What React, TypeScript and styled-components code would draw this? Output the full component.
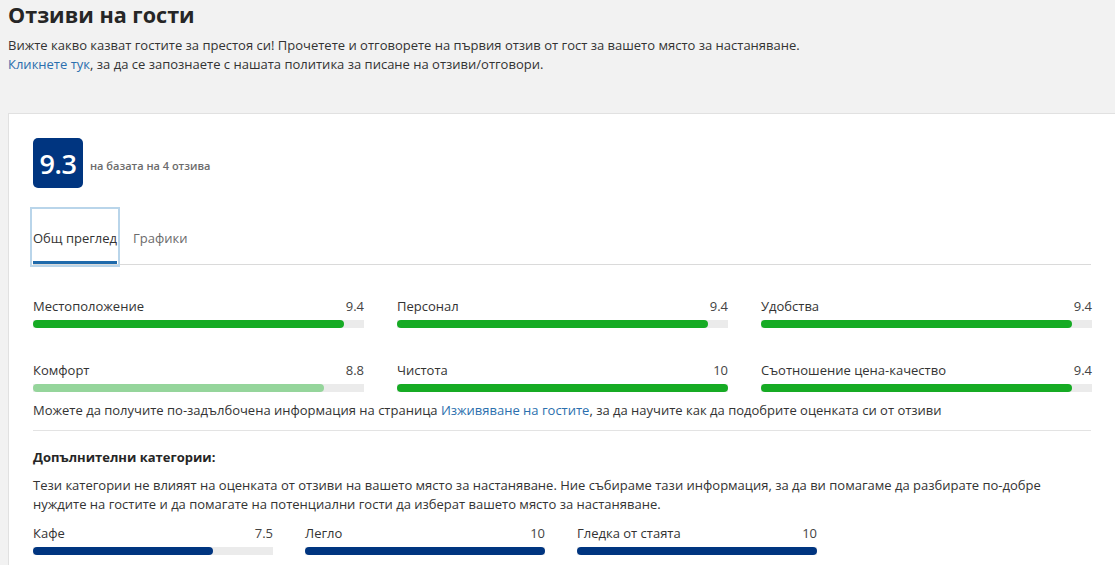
import type { FC } from 'react'
import styled, { createGlobalStyle } from 'styled-components'

const GlobalStyle = createGlobalStyle`
  html, body {
    margin: 0;
    padding: 0;
    background: #f2f2f2;
    overflow: hidden;
  }

  body {
    color: #333;
    font-family: 'Open Sans', 'Noto Sans', 'DejaVu Sans', sans-serif;
    font-size: 13px;
  }
`

type Rating = {
  label: string
  value: number
  tone?: 'strong' | 'soft' | 'navy'
}

const mainRatings: Rating[] = [
  { label: 'Местоположение', value: 9.4 },
  { label: 'Персонал', value: 9.4 },
  { label: 'Удобства', value: 9.4 },
  { label: 'Комфорт', value: 8.8, tone: 'soft' },
  { label: 'Чистота', value: 10 },
  { label: 'Съотношение цена-качество', value: 9.4 },
]

const extraRatings: Rating[] = [
  { label: 'Кафе', value: 7.5, tone: 'navy' },
  { label: 'Легло', value: 10, tone: 'navy' },
  { label: 'Гледка от стаята', value: 10, tone: 'navy' },
]

const fillColors = {
  strong: '#16ab24',
  soft: '#95d59b',
  navy: '#003580',
}

const Page = styled.div`
  padding-top: 1px;
`

const Header = styled.header`
  padding: 0 8px;
`

const Title = styled.h1`
  margin: 0;
  font-size: 21.6px;
  line-height: 28px;
  font-weight: 700;
  color: #262626;
`

const Intro = styled.p`
  margin: 7px 0 0;
  line-height: 19px;
`

const Link = styled.a`
  color: #2b6fae;
  text-decoration: none;
`

const Card = styled.section`
  margin: 39px 0 0 8px;
  padding: 24px;
  background: #fff;
  border: 1px solid #e1e1e1;
  border-right: 0;
  min-height: 500px;
`

const ScoreRow = styled.div`
  display: flex;
  align-items: center;
  gap: 7px;
`

const Badge = styled.div`
  width: 50px;
  height: 50px;
  border-radius: 5px;
  background: #003580;
  color: #fff;
  display: flex;
  align-items: center;
  justify-content: center;
  font-size: 27px;
  font-weight: 600;
  letter-spacing: -0.5px;
`

const ScoreNote = styled.span`
  font-size: 11px;
  font-weight: 600;
  color: #6b6b6b;
  padding-top: 5px;
`

const TabList = styled.div`
  display: flex;
  gap: 16px;
  margin-top: 22px;
  border-bottom: 1px solid #dadada;
`

const Tab = styled.button<{ $active?: boolean }>`
  all: unset;
  padding: 19px 0 14px;
  line-height: 18px;
  font-size: 13px;
  font-family: inherit;
  color: ${({ $active }) => ($active ? '#333' : '#6b6b6b')};
  border-bottom: 3px solid ${({ $active }) => ($active ? '#1f6aab' : 'transparent')};
  outline: ${({ $active }) => ($active ? '2px solid #b9d5ea' : 'none')};
  outline-offset: 1px;
`

const Grid = styled.div<{ $cols: number; $width: string; $gap: number }>`
  display: grid;
  grid-template-columns: repeat(${({ $cols }) => $cols}, ${({ $width }) => $width});
  column-gap: ${({ $gap }) => $gap}px;
  row-gap: 33px;
`

const MainGrid = styled(Grid)`
  margin-top: 32px;
`

const ExtraGrid = styled(Grid)`
  margin-top: 10px;
`

const Cell = styled.div`
  display: flex;
  flex-direction: column;
  gap: 5px;
`

const CellHead = styled.div`
  display: flex;
  justify-content: space-between;
  line-height: 18px;
`

const Value = styled.span`
  color: #444;
`

const Track = styled.div`
  height: 8px;
  background: #ebebeb;
`

const Fill = styled.div<{ $tone: keyof typeof fillColors }>`
  height: 100%;
  border-radius: 4px;
  background: ${({ $tone }) => fillColors[$tone]};
`

const Note = styled.p`
  margin: 9px 0 0;
  line-height: 18px;
  padding-bottom: 11px;
  border-bottom: 1px solid #e3e3e3;
`

const SubTitle = styled.h3`
  margin: 17px 0 0;
  font-size: 13px;
  line-height: 18px;
  font-weight: 700;
  color: #262626;
`

const Paragraph = styled.p`
  margin: 10px 0 0;
  line-height: 19px;
  max-width: 1030px;
`

const RatingCell: FC<{ rating: Rating }> = ({ rating }) => (
  <Cell>
    <CellHead>
      <span>{rating.label}</span>
      <Value>{rating.value}</Value>
    </CellHead>
    <Track>
      <Fill $tone={rating.tone ?? 'strong'} style={{ width: `${rating.value * 10}%` }} />
    </Track>
  </Cell>
)

const App: FC = () => (
  <Page>
    <GlobalStyle />
    <Header>
      <Title>Отзиви на гости</Title>
      <Intro>
        Вижте какво казват гостите за престоя си! Прочетете и отговорете на първия отзив от гост за вашето място за настаняване.
        <br />
        <Link href="#">Кликнете тук</Link>, за да се запознаете с нашата политика за писане на отзиви/отговори.
      </Intro>
    </Header>
    <Card>
      <ScoreRow>
        <Badge>9.3</Badge>
        <ScoreNote>на базата на 4 отзива</ScoreNote>
      </ScoreRow>
      <TabList>
        <Tab $active>Общ преглед</Tab>
        <Tab>Графики</Tab>
      </TabList>
      <MainGrid $cols={3} $width="331px" $gap={33}>
        {mainRatings.map((r) => (
          <RatingCell key={r.label} rating={r} />
        ))}
      </MainGrid>
      <Note>
        Можете да получите по-задълбочена информация на страница <Link href="#">Изживяване на гостите</Link>, за да научите как да подобрите оценката си от отзиви
      </Note>
      <SubTitle>Допълнителни категории:</SubTitle>
      <Paragraph>
        Тези категории не влияят на оценката от отзиви на вашето място за настаняване. Ние събираме тази информация, за да ви помагаме да разбирате по-добре нуждите на гостите и да помагате на потенциални гости да изберат вашето място за настаняване.
      </Paragraph>
      <ExtraGrid $cols={3} $width="240px" $gap={32}>
        {extraRatings.map((r) => (
          <RatingCell key={r.label} rating={r} />
        ))}
      </ExtraGrid>
    </Card>
  </Page>
)

export default App
